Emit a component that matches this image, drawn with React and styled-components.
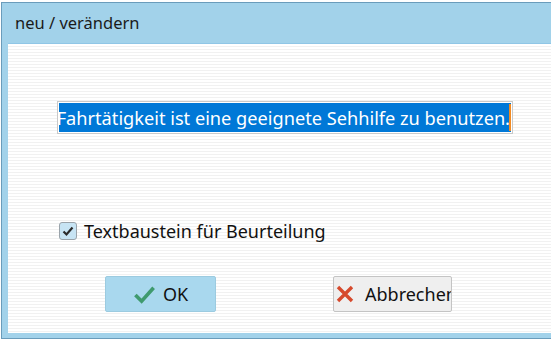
import React from "react";
import styled, { createGlobalStyle } from "styled-components";

const GlobalStyle = createGlobalStyle`
  html, body {
    margin: 0;
    padding: 0;
    background: #ffffff;
    overflow: hidden;
  }
  body {
    font-family: "Noto Sans", "Open Sans", sans-serif;
  }
`;

const CheckIcon = ({ size = 23, color = "#3f9a6e" }) => (
  <Icon width={size} height={size} viewBox="0 0 24 24">
    <path
      d="M2.5 12.5 L9 19 L21.5 5"
      fill="none"
      stroke={color}
      strokeWidth="3.8"
      strokeLinecap="butt"
      strokeLinejoin="miter"
    />
  </Icon>
);

const CrossIcon = ({ size = 18, color = "#d64a2d" }) => (
  <Icon width={size} height={size} viewBox="0 0 18 18">
    <path
      d="M2 2 L16 16 M16 2 L2 16"
      fill="none"
      stroke={color}
      strokeWidth="3.4"
    />
  </Icon>
);

const SmallCheck = () => (
  <Icon width="12" height="12" viewBox="0 0 12 12">
    <path
      d="M1.5 6.5 L4.5 9.5 L10.5 2.5"
      fill="none"
      stroke="#2b2b2b"
      strokeWidth="2.2"
    />
  </Icon>
);

const App = () => {
  return (
    <>
      <GlobalStyle />
      <Page>
        <Frame>
          <TitleBar>neu / verändern</TitleBar>
          <Content>
            <TextField>
              <Selection>
                <span>Fahrtätigkeit ist eine geeignete Sehhilfe zu benutzen.</span>
              </Selection>
              <Caret />
            </TextField>
            <CheckRow>
              <CheckBox>
                <SmallCheck />
              </CheckBox>
              <Label>Textbaustein für Beurteilung</Label>
            </CheckRow>
            <ButtonRow>
              <Button variant="primary" width={111}>
                <CheckIcon />
                <span>OK</span>
              </Button>
              <Button width={119} align="flex-start">
                <CrossIcon />
                <span>Abbrechen</span>
              </Button>
            </ButtonRow>
          </Content>
        </Frame>
      </Page>
    </>
  );
};

export default App;

const Icon = styled.svg`
  flex-shrink: 0;
  display: block;
`;

const Page = styled.div`
  width: 551px;
  height: 340px;
  padding: 2px 0 0 1px;
  box-sizing: border-box;
  overflow: hidden;
`;

const Frame = styled.div`
  display: flex;
  flex-direction: column;
  width: 560px;
  height: 337px;
  box-sizing: border-box;
  background: #a2d2ea;
  border: 1px solid #6a9cbb;
  border-right: none;
  padding: 0 0 5px 6px;
`;

const TitleBar = styled.div`
  height: 40px;
  display: flex;
  align-items: center;
  padding-left: 7px;
  font-size: 16.5px;
  color: #1a1a1a;
  padding-bottom: 1px;
  box-sizing: border-box;
`;

const Content = styled.div`
  flex: 1;
  display: flex;
  flex-direction: column;
  border-top: 1px solid #8fc6e6;
  background: repeating-linear-gradient(
    to bottom,
    #ffffff 0px,
    #ffffff 2px,
    #f1f1f1 2px,
    #f1f1f1 3px
  );
  padding: 57px 0 0 49px;
`;

const TextField = styled.div`
  position: relative;
  width: 456px;
  height: 33px;
  box-sizing: border-box;
  border: 1px solid #c9c9c9;
  background: #ffffff;
  padding: 1px;
`;

const Selection = styled.div`
  height: 100%;
  display: flex;
  align-items: center;
  justify-content: flex-end;
  overflow: hidden;
  white-space: nowrap;
  background: #0078d7;
  color: #ffffff;
  font-size: 18.2px;
  padding-right: 1px;

  span {
    flex-shrink: 0;
  }
`;

const Caret = styled.div`
  position: absolute;
  right: 1px;
  top: 2px;
  bottom: 2px;
  width: 2px;
  background: #f08a24;
`;

const CheckRow = styled.div`
  display: flex;
  align-items: center;
  gap: 7px;
  margin-top: 85px;
  margin-left: 2px;
`;

const CheckBox = styled.div`
  width: 18px;
  height: 18px;
  box-sizing: border-box;
  border: 1px solid #9aa3aa;
  border-radius: 3px;
  background: #c7e4f4;
  display: flex;
  align-items: center;
  justify-content: center;
`;

const Label = styled.span`
  font-size: 18px;
  color: #111111;
`;

const ButtonRow = styled.div`
  display: flex;
  gap: 117px;
  margin-top: 33px;
  margin-left: 48px;
`;

const Button = styled.div`
  width: ${(p) => p.width}px;
  height: 36px;
  box-sizing: border-box;
  display: flex;
  align-items: center;
  justify-content: ${(p) => p.align || "center"};
  padding-left: ${(p) => (p.align ? "2px" : "0")};
  gap: ${(p) => (p.align ? "11px" : "7px")};
  overflow: hidden;
  white-space: nowrap;
  border-radius: 2px;
  font-size: 18px;
  color: #111111;
  border: 1px solid ${(p) => (p.variant === "primary" ? "#9ccbe0" : "#c4c4c4")};
  background: ${(p) => (p.variant === "primary" ? "#a9d8ee" : "#efefef")};

  span {
    flex-shrink: 0;
  }
`;
